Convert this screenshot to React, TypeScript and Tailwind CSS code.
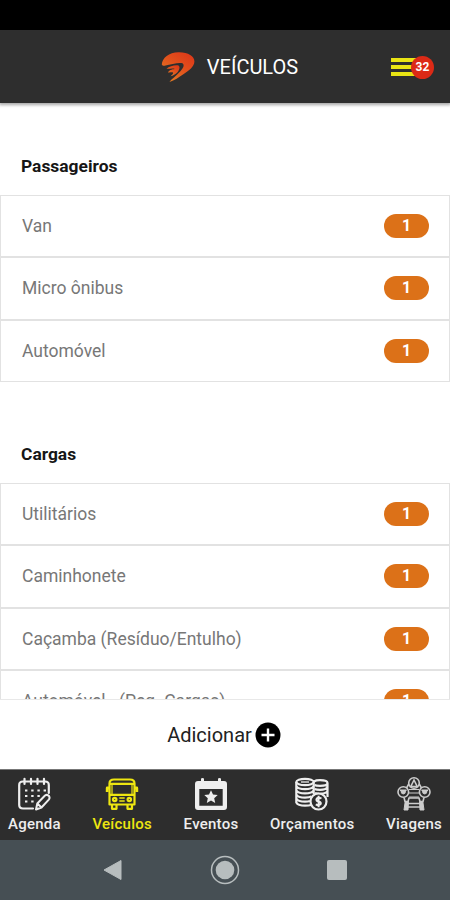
import type { ReactNode } from "react";

type Vehicle = {
  name: string;
  count: number;
};

const passengers: Vehicle[] = [
  { name: "Van", count: 1 },
  { name: "Micro ônibus", count: 1 },
  { name: "Automóvel", count: 1 },
];

const cargo: Vehicle[] = [
  { name: "Utilitários", count: 1 },
  { name: "Caminhonete", count: 1 },
  { name: "Caçamba (Resíduo/Entulho)", count: 1 },
  { name: "Automóvel - (Peq. Cargas)", count: 1 },
];

const Logo = () => (
  <svg width="34" height="32" viewBox="0 0 34 32">
    <defs>
      <linearGradient id="logo" x1="1" y1="0" x2="0.2" y2="1">
        <stop offset="0" stopColor="#dc3418" />
        <stop offset="0.5" stopColor="#e2501c" />
        <stop offset="1" stopColor="#e07c24" />
      </linearGradient>
    </defs>
    <path
      fill="url(#logo)"
      d="M0.8 13.5C1 7 8 1.4 17.5 1.2C27 1 33.4 5 33.4 10.5C33.4 15.5 28 19.5 22 23.5C18 26.2 13.5 29.5 8.5 31C10 28.5 11.5 27.8 13.5 26C18 22 21.8 18 22.6 15C22.8 13.2 22 12.3 20.5 12C16.5 11.4 9.5 13.4 4.5 14.6C3 15 1.2 14.8 0.8 13.5Z"
    />
    <path
      fill="url(#logo)"
      d="M5.5 17.8C8 15.2 13.5 13.8 16.6 14.2C19.6 14.8 18.8 18.5 16.3 21.5C14.5 23.3 12 24.8 9.5 25.2C11.5 23.8 12.8 22.2 12 21.6C10.8 20.9 9.5 21.6 7 21.4C7.6 19.6 11 18.2 13.8 18C12.5 16.9 8.5 17.8 5.5 17.8Z"
    />
  </svg>
);

const AgendaIcon = () => (
  <svg width="34" height="34" viewBox="0 0 34 34" fill="none" stroke="currentColor" strokeLinecap="round" strokeLinejoin="round">
    <path strokeWidth="2.2" d="M16 31.5H6Q2.2 31.5 2.2 28V8Q2.2 4.5 6 4.5H28Q31.8 4.5 31.8 8V16" />
    <path strokeWidth="2.2" d="M7.5 1.8V7M14 1.8V7M20.5 1.8V7M27 1.8V7" />
    <path strokeWidth="2" strokeLinecap="butt" strokeDasharray="2.4 3.8" d="M8 13.5H29M8 19H24M8 24.5H18" />
    <path strokeWidth="2" d="M19 32.5L20.3 26.5L28 18.5Q30.2 17 32 19Q33.2 21 31.8 22.6L24.5 30.5ZM20.3 26.5L24.5 30.5" />
  </svg>
);

const BusIcon = () => (
  <svg width="34" height="34" viewBox="0 0 34 34" fill="none" stroke="currentColor" strokeWidth="2.2" strokeLinejoin="round">
    <path d="M4.5 27.5V6.5Q4.5 2.5 9 2.5H25Q29.5 2.5 29.5 6.5V27.5Z" />
    <path d="M4.5 6.8H29.5M4.5 17.8H29.5" />
    <path strokeWidth="1.2" d="M7 6.8V17.8M27 6.8V17.8" />
    <path strokeWidth="2.8" d="M4.5 11H2.2V15M29.5 11H31.8V15" />
    <circle cx="9.7" cy="22.5" r="1.7" />
    <circle cx="24.3" cy="22.5" r="1.7" />
    <path strokeWidth="1.6" d="M14.3 21H19.7M14.3 24H19.7" />
    <path d="M7 27.5V31.8H11.5V28M22.5 28V31.8H27V27.5" />
  </svg>
);

const EventIcon = () => (
  <svg width="34" height="34" viewBox="0 0 34 34" fill="currentColor">
    <path
      fillRule="evenodd"
      d="M7 2Q7 1 8.5 1T10 2V4H24V2Q24 1 25.5 1T27 2V4H30Q33 4 33 7V30Q33 33 30 33H4Q1 33 1 30V7Q1 4 4 4H7ZM5.3 12V28.7H28.7V12Z"
    />
    <path d="M17 13.3L19 17.6L23.7 18.1L20.2 21.3L21.2 26L17 23.6L12.8 26L13.8 21.3L10.3 18.1L15 17.6Z" />
  </svg>
);

const CoinsIcon = () => (
  <svg width="36" height="34" viewBox="0 0 36 34" fill="none" stroke="currentColor" strokeWidth="2.2">
    <ellipse cx="11" cy="5" rx="8.7" ry="3.1" />
    <path d="M7 5H15" strokeWidth="1.3" />
    <path d="M2.3 5V25.5Q4 28.7 11 28.7Q15 28.7 17 28M19.7 5V17M2.3 9Q4 12.2 11 12.2T19.7 9M2.3 13.2Q4 16.4 11 16.4T19.7 13.2M2.3 17.4Q4 20.6 11 20.6Q15.5 20.6 17.5 19.4M2.3 21.5Q4 24.7 11 24.7Q14 24.7 16 24" />
    <path d="M20 4.5Q22 3.2 26 3.2Q33.5 3.2 33.5 6T26 8.8Q22 8.8 20.5 8M33.5 6V20M20.5 12Q22.5 12.8 26 12.8Q32 12.8 33.5 10M21 16Q24 17 27 16.7Q32 16.5 33.5 14" />
    <circle cx="24.5" cy="24.5" r="8" fill="#2d2d2d" />
    <path strokeWidth="2" d="M27.5 21.5Q24.5 19.8 22.8 21.5Q21.5 23.8 24.5 24.5Q27.8 25.3 26.5 27.3Q24.5 29 21.8 27.3M24.6 18.8V30.2" />
  </svg>
);

const TripsIcon = () => (
  <svg width="34" height="36" viewBox="0 0 34 36" fill="none" stroke="currentColor" strokeWidth="1.6" className="text-[#cccccc]">
    <circle cx="17" cy="7" r="5.3" />
    <path d="M17 4L13.8 10.5H20.2ZM11.8 8L9.5 12M22.2 8L24.5 12" />
    <circle cx="6.3" cy="16" r="5.3" />
    <circle cx="27.7" cy="16" r="5.3" />
    <path d="M3 14.2H9.6M24.4 14.2H31" />
    <path d="M4 15Q4 18 6.3 18T8.6 15ZM25.4 15Q25.4 18 27.7 18T30 15Z" fill="currentColor" strokeWidth="0.8" />
    <path d="M12 13.5H22M11.8 17H22.2M12 21H22" strokeWidth="1.1" />
    <path d="M7 21.5L8 25.5H11L12 22H22L23 25.5H26L27 21.5" />
    <path d="M7 34L8.2 25.5H11.5L11 34ZM23 34L22.5 25.5H25.8L27 34Z" fill="currentColor" strokeWidth="1" />
    <path d="M11 27.5H23M11 31H23" />
  </svg>
);

const navItems: { label: string; icon: ReactNode; active?: boolean }[] = [
  { label: "Agenda", icon: <AgendaIcon /> },
  { label: "Veículos", icon: <BusIcon />, active: true },
  { label: "Eventos", icon: <EventIcon /> },
  { label: "Orçamentos", icon: <CoinsIcon /> },
  { label: "Viagens", icon: <TripsIcon /> },
];

const Section = ({ title, items }: { title: string; items: Vehicle[] }) => (
  <section>
    <h2 className="flex h-[57px] items-center pl-[21px] text-[17.4px] font-bold text-[#161616]">{title}</h2>
    <ul>
      {items.map((item) => (
        <li
          key={item.name}
          className="flex h-[62.5px] items-center justify-between border border-[#e2e2e2] pr-5 pl-[21px]"
        >
          <span className="text-[17.5px] text-[#777777]">{item.name}</span>
          <span className="flex h-6 w-[45px] items-center justify-center rounded-full bg-[#dc7118] text-[16px] font-bold text-white">
            {item.count}
          </span>
        </li>
      ))}
    </ul>
  </section>
);

export default function App() {
  return (
    <div className="flex h-[900px] w-[450px] flex-col overflow-hidden bg-white font-['Roboto',sans-serif]">
      <div className="h-[30px] shrink-0 bg-black" />
      <header className="z-10 grid h-[73px] shrink-0 grid-cols-[1fr_auto_1fr] items-center bg-[#2e2e2e] shadow-[0_1px_3px_1px_rgba(0,0,0,0.35)]">
        <div />
        <div className="flex items-center gap-3 pl-[9px]">
          <Logo />
          <h1 className="pt-px text-[20px] text-white">VEÍCULOS</h1>
        </div>
        <div className="relative mr-4 flex items-center justify-self-end pt-px">
          <div className="flex w-[43px] flex-col gap-[3px]">
            <span className="h-1 w-7 bg-[#e9e414]" />
            <span className="h-1 w-7 bg-[#e9e414]" />
            <span className="h-1 w-7 bg-[#e9e414]" />
          </div>
          <span className="absolute right-0 flex size-[23px] items-center justify-center rounded-full bg-[#dc2a16] text-[12px] font-bold text-white">
            32
          </span>
        </div>
      </header>
      <main className="flex min-h-0 flex-1 flex-col gap-[43.5px] overflow-hidden pt-[34.5px]">
        <Section title="Passageiros" items={passengers} />
        <Section title="Cargas" items={cargo} />
      </main>
      <div className="flex h-[70px] shrink-0 items-center justify-center gap-[3px] border-t border-[#e8e8e8] bg-white pr-0.5 text-[20px] text-[#222222]">
        Adicionar
        <svg width="26" height="26" viewBox="0 0 26 26">
          <circle cx="13" cy="13" r="12.5" fill="#000" />
          <path d="M13 6.5V19.5M6.5 13H19.5" stroke="#fff" strokeWidth="2.4" />
        </svg>
      </div>
      <nav className="flex h-[71px] shrink-0 justify-between border-t border-[#777777] bg-[#2d2d2d] px-2 pt-1.5">
        {navItems.map((item) => (
          <div
            key={item.label}
            className={`flex flex-col items-center ${item.active ? "text-[#eee611]" : "text-[#eeeeee]"}`}
          >
            <div className="flex h-[35px] items-center">{item.icon}</div>
            <span className="mt-[3px] text-[15px] leading-5 font-medium tracking-[0.25px]">{item.label}</span>
          </div>
        ))}
      </nav>
      <div className="flex h-[60px] shrink-0 items-center justify-between bg-[#464f54] px-[103px]">
        <svg width="19" height="22" viewBox="0 0 19 22">
          <path d="M1 11L18 1.5V20.5Z" fill="#b7bdbe" stroke="#b7bdbe" strokeLinejoin="round" />
        </svg>
        <svg width="30" height="30" viewBox="0 0 30 30">
          <circle cx="15" cy="15" r="13.5" fill="none" stroke="#b7bdbe" strokeWidth="1.5" />
          <circle cx="15" cy="15" r="9.3" fill="#b7bdbe" />
        </svg>
        <div className="size-5 rounded-[2px] bg-[#b7bdbe]" />
      </div>
    </div>
  );
}
